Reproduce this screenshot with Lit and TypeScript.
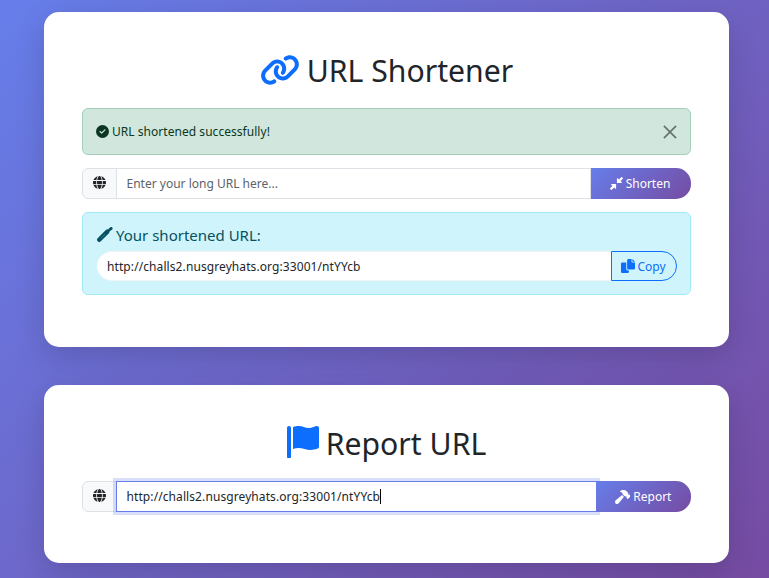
import { LitElement, html, css, svg } from "lit";
import { customElement } from "lit/decorators.js";

const icon = (vb: string, d: string, cls = "") =>
  html`<svg class="ic ${cls}" viewBox="${vb}" aria-hidden="true" fill="currentColor">${svg`<path d="${d}"></path>`}</svg>`;

const LINK = "M579.8 267.7c56.5-56.5 56.5-148 0-204.5c-50-50-128.8-56.5-186.3-15.4l-1.6 1.1c-14.4 10.3-17.7 30.3-7.4 44.6s30.3 17.7 44.6 7.4l1.6-1.1c32.1-22.9 76-19.3 103.8 8.6c31.5 31.5 31.5 82.5 0 114L422.3 334.8c-31.5 31.5-82.5 31.5-114 0c-27.9-27.9-31.5-71.8-8.6-103.8l1.1-1.6c10.3-14.4 6.9-34.4-7.4-44.6s-34.4-6.9-44.6 7.4l-1.1 1.6C206.5 251.2 213 330 263 380c56.5 56.5 148 56.5 204.5 0L579.8 267.7zM60.2 244.3c-56.5 56.5-56.5 148 0 204.5c50 50 128.8 56.5 186.3 15.4l1.6-1.1c14.4-10.3 17.7-30.3 7.4-44.6s-30.3-17.7-44.6-7.4l-1.6 1.1c-32.1 22.9-76 19.3-103.8-8.6C74 372 74 321 105.5 289.5L217.7 177.2c31.5-31.5 82.5-31.5 114 0c27.9 27.9 31.5 71.8 8.6 103.9l-1.1 1.6c-10.3 14.4-6.9 34.4 7.4 44.6s34.4 6.9 44.6-7.4l1.1-1.6C433.5 260.8 427 182 377 132c-56.5-56.5-148-56.5-204.5 0L60.2 244.3z";
const CHECK = "M256 512A256 256 0 1 0 256 0a256 256 0 1 0 0 512zM369 209L241 337c-9.4 9.4-24.6 9.4-33.9 0l-64-64c-9.4-9.4-9.4-24.6 0-33.9s24.6-9.4 33.9 0l47 47L335 175c9.4-9.4 24.6-9.4 33.9 0s9.4 24.6 0 33.9z";
const GLOBE = "M352 256c0 22.2-1.2 43.6-3.3 64H163.3c-2.2-20.4-3.3-41.8-3.3-64s1.2-43.6 3.3-64H348.7c2.2 20.4 3.3 41.8 3.3 64zm28.8-64H503.9c5.3 20.5 8.1 41.9 8.1 64s-2.8 43.5-8.1 64H380.8c2.1-20.6 3.2-42 3.2-64s-1.1-43.4-3.2-64zm112.6-32H376.7c-10-63.9-29.8-117.4-55.3-151.6c78.3 20.7 142 77.5 171.9 151.6zm-149.1 0H167.7c6.1-36.4 15.5-68.6 27-94.7c10.5-23.6 22.2-40.7 33.5-51.5C239.4 3.2 248.7 0 256 0s16.6 3.2 27.8 13.8c11.3 10.8 23 27.9 33.5 51.5c11.6 26 20.9 58.2 27 94.7zm-209 0H18.6C48.6 85.9 112.2 29.1 190.6 8.4C165.1 42.6 145.3 96.1 135.3 160zM8.1 192H131.2c-2.1 20.6-3.2 42-3.2 64s1.1 43.4 3.2 64H8.1C2.8 299.5 0 278.1 0 256s2.8-43.5 8.1-64zM194.7 446.6c-11.6-26-20.9-58.2-27-94.6H344.3c-6.1 36.4-15.5 68.6-27 94.6c-10.5 23.6-22.2 40.7-33.5 51.5C272.6 508.8 263.3 512 256 512s-16.6-3.2-27.8-13.8c-11.3-10.8-23-27.9-33.5-51.5zM135.3 352c10 63.9 29.8 117.4 55.3 151.6C112.2 482.9 48.6 426.1 18.6 352H135.3zm358.1 0c-30 74.1-93.6 130.9-171.9 151.6c25.5-34.2 45.2-87.7 55.3-151.6H493.4z";
const COMPRESS = "M439 7c9.4-9.4 24.6-9.4 33.9 0l32 32c9.4 9.4 9.4 24.6 0 33.9l-87 87 39 39c6.9 6.9 8.9 17.2 5.2 26.2s-12.5 14.8-22.2 14.8H296c-13.3 0-24-10.7-24-24V72c0-9.7 5.8-18.5 14.8-22.2s19.3-1.7 26.2 5.2l39 39 87-87zM72 272H216c13.3 0 24 10.7 24 24V440c0 9.7-5.8 18.5-14.8 22.2s-19.3 1.7-26.2-5.2l-39-39-87 87c-9.4 9.4-24.6 9.4-33.9 0L7 473c-9.4-9.4-9.4-24.6 0-33.9l87-87L55 313c-6.9-6.9-8.9-17.2-5.2-26.2s12.5-14.8 22.2-14.8z";
const COPY = "M384 96L384 0h-112c-26.51 0-48 21.49-48 48v288c0 26.51 21.49 48 48 48H464c26.51 0 48-21.49 48-48V128h-95.1C398.4 128 384 113.6 384 96zM416 0v96h96L416 0zM192 352V128h-144c-26.51 0-48 21.49-48 48v288c0 26.51 21.49 48 48 48h192c26.51 0 48-21.49 48-48L288 416h-32C220.7 416 192 387.3 192 352z";
const FLAG = "M64 496C64 504.8 56.75 512 48 512h-32C7.25 512 0 504.8 0 496V32c0-17.75 14.25-32 32-32s32 14.25 32 32V496zM476.3 0c-6.365 0-13.01 1.35-19.34 4.233c-45.69 20.86-79.56 27.94-107.8 27.94c-59.96 0-94.81-31.86-163.9-31.87C160.9 .3055 131.6 4.867 96 15.75v350.5c32-9.984 59.87-14.1 84.85-14.1c73.63 0 124.9 31.78 198.6 31.78c31.91 0 68.02-5.971 111.1-23.09C504.1 355.9 512 344.4 512 332.1V30.73C512 11.1 495.3 0 476.3 0z";
const HAMMER = "M413.5 237.5c-28.2 4.8-58.2-3.6-80-25.4l-38.1-38.1C280.4 159 272 138.8 272 117.6V105.5L192.3 62c-5.3-2.9-8.6-8.6-8.3-14.7s3.9-11.5 9.5-14l47.2-21C259.1 4.2 279 0 299.2 0h18.1c36.7 0 72 14 98.7 39.1l44.6 42c24.2 22.8 33.2 55.7 26.6 86L503 183l8-8c9.4-9.4 24.6-9.4 33.9 0l24 24c9.4 9.4 9.4 24.6 0 33.9l-88 88c-9.4 9.4-24.6 9.4-33.9 0l-24-24c-9.4-9.4-9.4-24.6 0-33.9l8-8-17.5-17.5zM27.4 377.1L260.9 182.6c3.5 4.9 7.5 9.6 11.8 14l38.1 38.1c6 6 12.4 11.2 19.2 15.7L134.9 484.6c-14.5 17.4-36 27.4-58.6 27.4C34.1 512 0 477.8 0 435.7c0-22.6 10.1-44.1 27.4-58.6z";

const URL_TEXT = "http://challs2.nusgreyhats.org:33001/ntYYcb";

@customElement("app-root")
export class AppRoot extends LitElement {
  static styles = css`
    :host {
      display: block;
      box-sizing: border-box;
      height: 578px;
      overflow: hidden;
      padding: 12px 40px 0 44px;
      background: linear-gradient(135deg, #667eea 0%, #764ba2 100%);
      font-family: "Noto Sans", sans-serif;
      color: #212529;
    }
    * { box-sizing: border-box; }
    .ic { display: inline-block; height: 1em; width: auto; flex: none; }
    .card {
      background: #fff;
      border-radius: 15px;
      padding: 38px;
      box-shadow: 0 10px 30px rgba(0, 0, 0, 0.15);
    }
    .card + .card { margin-top: 38px; }
    .card.first { padding-bottom: 52px; }
    .card.second { padding-bottom: 51px; }
    h1 {
      margin: 0 0 20px;
      height: 38px;
      padding-top: 4px;
      font-size: 30.2px;
      line-height: 34px;
      font-weight: 400;
      display: flex;
      justify-content: center;
      align-items: center;
      gap: 7px;
    }
    h1 .ic { color: #0d6efd; font-size: 32px; margin-bottom: 2px; }
    h1 .ic.flag { margin-bottom: 4px; }
    .alert {
      display: flex;
      align-items: center;
      height: 47px;
      padding: 0 13px;
      background: #d1e7dd;
      border: 1px solid #a3cfbb;
      border-radius: 6px;
      color: #0a3622;
      font-size: 12px;
      gap: 3px;
      margin-bottom: 13px;
    }
    .alert .msg { flex: 1; letter-spacing: 0.04px; }
    .alert .ic { font-size: 13px; }
    .close { width: 14px; height: 14px; color: #000; opacity: .5; flex: none; }
    .group { display: flex; height: 31px; font-size: 12px; }
    .addon {
      width: 35px;
      display: flex;
      align-items: center;
      justify-content: center;
      padding-bottom: 2px;
      background: #f8f9fa;
      border: 1px solid #dee2e6;
      border-radius: 6px 0 0 6px;
      margin-right: -1px;
      flex: none;
    }
    .addon .ic { font-size: 13px; }
    .input {
      flex: 1;
      min-width: 0;
      display: flex;
      align-items: center;
      padding: 0 9.5px;
      background: #fff;
      border: 1px solid #dee2e6;
      color: #212529;
    }
    .url { letter-spacing: 0.09px; }
    .placeholder { color: #5c636a; }
    .input.focus {
      border-color: #667eea;
      box-shadow: 0 0 0 3px rgba(102, 126, 234, 0.25);
      position: relative;
      z-index: 1;
      margin-right: -1px;
    }
    .caret { display: inline-block; width: 1px; height: 15px; background: #000; }
    .btn {
      display: flex;
      align-items: center;
      justify-content: center;
      gap: 3px;
      color: #fff;
      border-radius: 0 15px 15px 0;
      background: linear-gradient(135deg, #667eea 0%, #764ba2 100%);
      flex: none;
      position: relative;
      z-index: 2;
    }
    .btn.shorten { width: 100px; padding-right: 2px; }
    .btn.report { width: 95px; padding-right: 1px; }
    .btn .ic { font-size: 13px; }
    .btn.report .ic { font-size: 14px; }
    .result {
      margin-top: 13px;
      height: 83px;
      padding: 11px 13px 0 14px;
      background: #cff4fc;
      border: 1px solid #9eeaf9;
      border-radius: 6px;
      color: #055160;
    }
    .result-title {
      display: flex;
      align-items: center;
      gap: 3px;
      font-size: 15px;
      line-height: 22px;
      margin-bottom: 5px;
    }
    .pen { width: 17px; height: 16px; flex: none; margin-left: -1px; }
    .result .group { height: 30px; color: #212529; }
    .result .input {
      border-radius: 15px 0 0 15px;
      border: 1px solid #f1f3f5;
      border-width: 1px 0 1px 0;
      padding: 0 10px;
    }
    .copy {
      width: 66px;
      display: flex;
      align-items: center;
      justify-content: center;
      gap: 2px;
      padding-right: 1px;
      color: #0d6efd;
      border: 1px solid #0d6efd;
      border-radius: 0 15px 15px 0;
      flex: none;
    }
    .copy .ic { font-size: 14px; }
  `;

  render() {
    return html`
      <section class="card first">
        <h1>${icon("0 0 640 512", LINK)}<span>URL Shortener</span></h1>
        <div class="alert">
          ${icon("0 0 512 512", CHECK)}
          <span class="msg">URL shortened successfully!</span>
          <svg class="close" viewBox="0 0 16 16" aria-hidden="true"><path d="M1 1l14 14M15 1L1 15" stroke="currentColor" stroke-width="1.9" fill="none"></path></svg>
        </div>
        <div class="group">
          <div class="addon">${icon("0 0 512 512", GLOBE)}</div>
          <div class="input"><span class="placeholder">Enter your long URL here...</span></div>
          <div class="btn shorten">${icon("0 0 512 512", COMPRESS)}<span>Shorten</span></div>
        </div>
        <div class="result">
          <div class="result-title">
            <svg class="pen" viewBox="0 0 17 16" aria-hidden="true" fill="none" stroke-linecap="round">
              <path d="M3.2 12.8L11.4 4.6" stroke="#055160" stroke-width="4.4"></path>
              <path d="M13.6 2.8L15.2 1.4" stroke="#055160" stroke-width="2.8"></path>
              <path d="M5 11.2L8.8 7.4" stroke="#3f8a9a" stroke-width="0.8"></path>
            </svg>
            <span>Your shortened URL:</span>
          </div>
          <div class="group">
            <div class="input"><span class="url">${URL_TEXT}</span></div>
            <div class="copy">${icon("0 0 512 512", COPY)}<span>Copy</span></div>
          </div>
        </div>
      </section>
      <section class="card second">
        <h1>${icon("0 0 512 512", FLAG, "flag")}<span>Report URL</span></h1>
        <div class="group">
          <div class="addon">${icon("0 0 512 512", GLOBE)}</div>
          <div class="input focus"><span class="url">${URL_TEXT}</span><span class="caret"></span></div>
          <div class="btn report">${icon("0 0 576 512", HAMMER)}<span>Report</span></div>
        </div>
      </section>
    `;
  }
}
